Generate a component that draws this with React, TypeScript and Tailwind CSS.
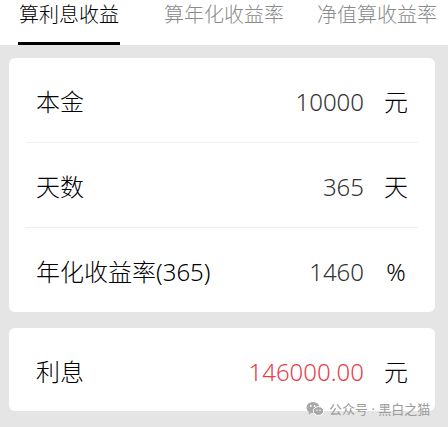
import React from "react";

const font = "font-['Noto_Sans','Noto_Sans_CJK_SC',sans-serif]";

function Row({ label, value, unit, red }: { label: string; value: string; unit: string; red?: boolean }) {
  return (
    <div className="flex h-[84px] items-center pl-[27px] pr-[27px] pt-[4px] font-light">
      <div className="flex-1 text-[24px] leading-none text-black">{label}</div>
      <div className={`text-[24px] leading-none ${red ? "text-[#e8404b]" : "text-[#333333]"}`}>{value}</div>
      <div className="ml-[20px] w-[24px] text-center text-[24px] leading-none text-black">{unit}</div>
    </div>
  );
}

export default function App() {
  return (
    <div className={`${font} relative h-[427px] w-[448px] overflow-hidden bg-[#e5e5e5]`}>
      <div className="flex h-[45px] items-start bg-white font-light">
        <div className="relative ml-[19px] flex h-[45px] flex-col">
          <div className="pt-[1px] text-[20px] leading-[28px] text-black">算利息收益</div>
          <div className="absolute bottom-[0px] left-[-1px] right-[-1px] h-[3px] bg-black" />
        </div>
        <div className="ml-[45px] pt-[1px] text-[20px] leading-[28px] text-[#8a8a8a]">算年化收益率</div>
        <div className="ml-[33px] pt-[1px] text-[20px] leading-[28px] text-[#8a8a8a]">净值算收益率</div>
      </div>

      <div className="ml-[9px] mt-[13px] w-[426px] rounded-[6px] bg-white">
        <Row label="本金" value="10000" unit="元" />
        <div className="mx-[17px] h-px bg-[#eeeeee]" />
        <Row label="天数" value="365" unit="天" />
        <div className="mx-[17px] h-px bg-[#eeeeee]" />
        <Row label="年化收益率(365)" value="1460" unit="%" />
      </div>

      <div className="ml-[9px] mt-[16px] w-[426px] rounded-[6px] bg-white">
        <div className="h-[83px]">
          <Row label="利息" value="146000.00" unit="元" red />
        </div>
      </div>

      <div className="absolute left-[306px] top-[401px] flex items-center gap-[5px] text-[13px] leading-none text-[#9a9a9a]">
        <svg width="18" height="16" viewBox="0 0 18 16">
          <ellipse cx="7" cy="6.5" rx="6.5" ry="5.5" fill="#a8a8a8" />
          <path d="M3 11 L2.5 13.5 L6 11.5 Z" fill="#a8a8a8" />
          <ellipse cx="12.5" cy="10" rx="5.2" ry="4.4" fill="#a8a8a8" stroke="#ffffff" strokeWidth="1" />
          <circle cx="4.8" cy="5" r="0.9" fill="#fff" />
          <circle cx="8.6" cy="5" r="0.9" fill="#fff" />
          <circle cx="11" cy="9.2" r="0.7" fill="#fff" />
          <circle cx="14" cy="9.2" r="0.7" fill="#fff" />
        </svg>
        <span>公众号 · 黑白之猫</span>
      </div>
    </div>
  );
}
